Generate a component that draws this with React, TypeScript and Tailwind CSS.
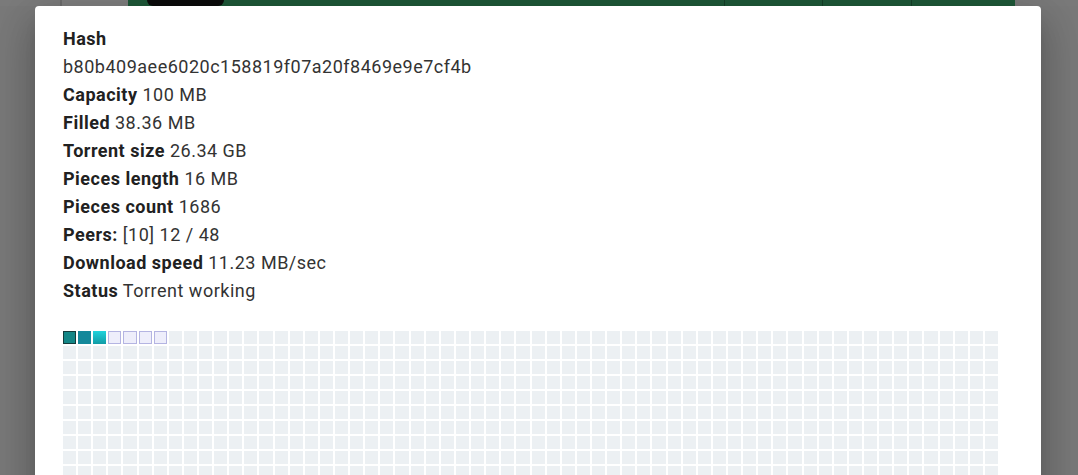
import React from "react";

const INFO: { label: string; value: string }[] = [
  { label: "Capacity", value: "100 MB" },
  { label: "Filled", value: "38.36 MB" },
  { label: "Torrent size", value: "26.34 GB" },
  { label: "Pieces length", value: "16 MB" },
  { label: "Pieces count", value: "1686" },
  { label: "Peers:", value: "[10] 12 / 48" },
  { label: "Download speed", value: "11.23 MB/sec" },
  { label: "Status", value: "Torrent working" },
];

const PIECES = 1686;

function pieceClass(i: number) {
  if (i === 0) return "bg-[#138686] border border-[#143c3c]";
  if (i === 1) return "bg-[#14889a]";
  if (i === 2) return "bg-gradient-to-b from-[#1fd3dc] to-[#119ca6]";
  if (i < 7) return "bg-[#eeeefb] border border-[#b4b4e2]";
  return "bg-[#ecf0f3]";
}

export default function App() {
  return (
    <div
      className="relative h-[475px] w-[1078px] overflow-hidden bg-[#797979]"
      style={{ fontFamily: "Roboto, 'Liberation Sans', sans-serif" }}
    >
      {/* page behind the backdrop */}
      <div className="flex h-[6px]">
        <div className="w-[60px] bg-[#7b7b7b]" />
        <div className="w-[2px] bg-[#6c6c6c]" />
        <div className="w-[66px] bg-[#7e7e7e]" />
        <div className="flex w-[887px] bg-[#1e5838]">
          <div className="ml-[19px] w-[77px] rounded-b-[8px] bg-[#0c0c0c]" />
          <div className="ml-[500px] w-px bg-[#153f28]" />
          <div className="ml-[97px] w-px bg-[#153f28]" />
          <div className="ml-[88px] w-px bg-[#153f28]" />
        </div>
        <div className="flex-1 bg-[#7a7a7a]" />
      </div>

      {/* dialog */}
      <div className="absolute left-[35px] top-[6px] w-[1006px] rounded-[4px] bg-white pb-10 pl-[28px] pr-[43px] pt-[19px] shadow-[0_11px_15px_-7px_rgba(0,0,0,0.2),0_24px_38px_3px_rgba(0,0,0,0.14),0_9px_46px_8px_rgba(0,0,0,0.12)]">
        <div className="text-[18px] leading-[28px] tracking-[0.5px] text-[#212121]">
          <div className="font-bold">Hash</div>
          <div className="text-[#333333]">b80b409aee6020c158819f07a20f8469e9e7cf4b</div>
          {INFO.map((row) => (
            <div key={row.label}>
              <span className="font-bold">{row.label}</span>{" "}
              <span className="text-[#333333]">{row.value}</span>
            </div>
          ))}
        </div>

        <div className="mt-[26px] grid grid-cols-[repeat(62,minmax(0,1fr))] gap-[2px]">
          {Array.from({ length: PIECES }, (_, i) => (
            <div key={i} className={`h-[13px] ${pieceClass(i)}`} />
          ))}
        </div>
      </div>
    </div>
  );
}
